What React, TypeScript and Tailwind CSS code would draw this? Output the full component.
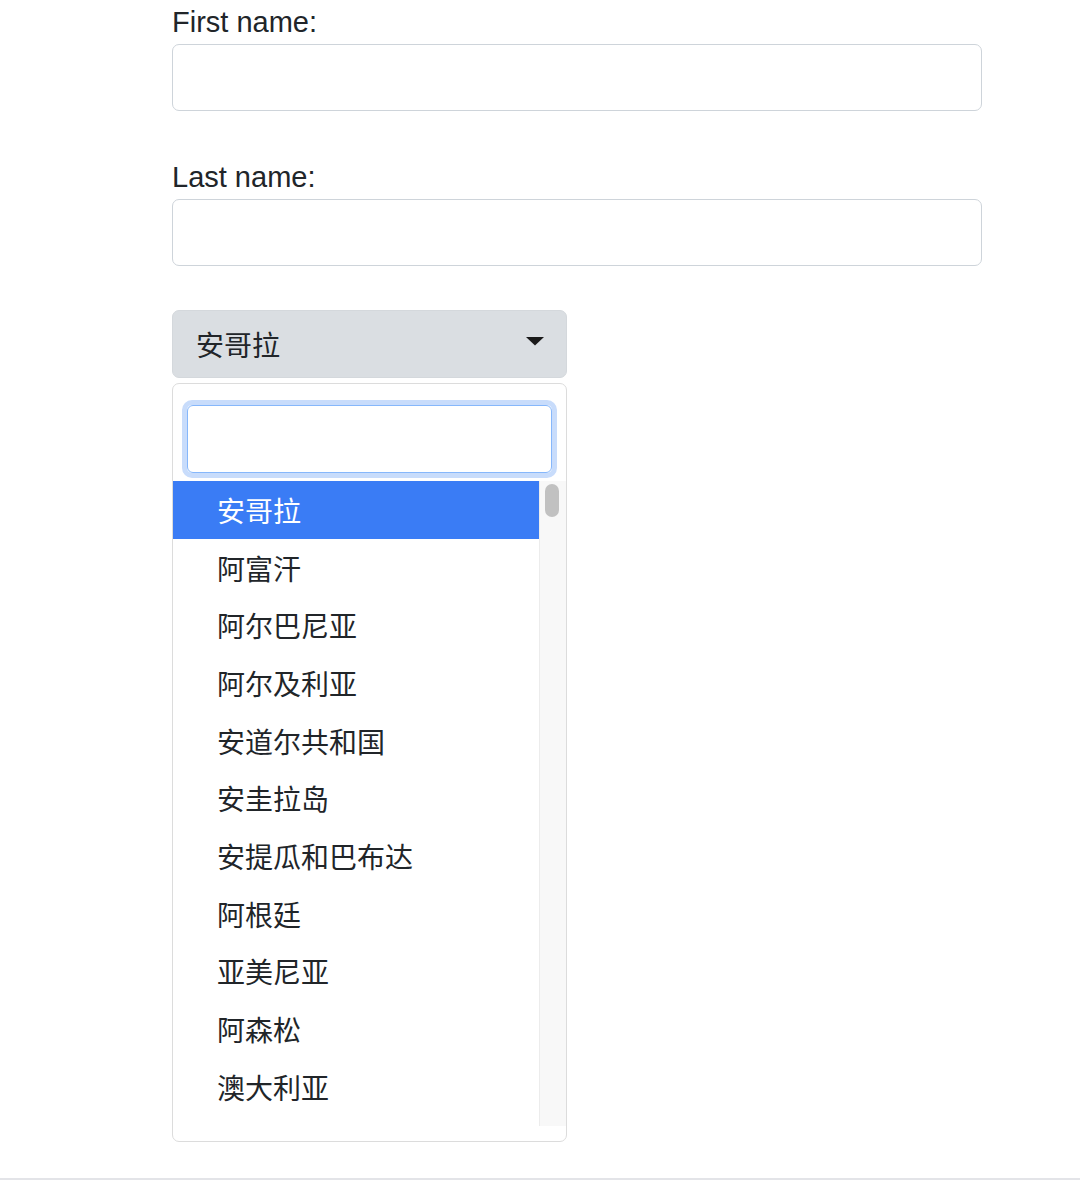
const countries = [
  '安哥拉',
  '阿富汗',
  '阿尔巴尼亚',
  '阿尔及利亚',
  '安道尔共和国',
  '安圭拉岛',
  '安提瓜和巴布达',
  '阿根廷',
  '亚美尼亚',
  '阿森松',
  '澳大利亚',
];

const latin = { fontFamily: '"Liberation Sans", "Noto Sans CJK SC", sans-serif' };
const cjk = { fontFamily: '"Noto Sans CJK SC", "Liberation Sans", sans-serif' };

function Field({ label }: { label: string }) {
  return (
    <div className="mb-[44px]">
      <label className="block text-[29px] leading-[44px] text-[#212529]" style={latin}>
        {label}
      </label>
      <input
        type="text"
        className="block h-[67px] w-[810px] rounded-[7px] border-[1.5px] border-[#ced4da] bg-white outline-none"
      />
    </div>
  );
}

function CountrySelect() {
  return (
    <div className="w-[395px]">
      <div className="flex h-[68px] items-center justify-between rounded-[7px] border border-[#d4d8dc] bg-[#dadee2] pl-[23px] pr-[22px]">
        <span className="text-[28px] text-[#212529]" style={cjk}>
          安哥拉
        </span>
        <svg width="18" height="9" viewBox="0 0 18 9" className="mb-[6px]">
          <path d="M0 0 H18 L9 8.5 Z" fill="#1a1a1a" />
        </svg>
      </div>
      <div className="mt-[5px] h-[759px] rounded-[7px] border-[1.5px] border-[#dcdcdc] bg-white">
        <div className="px-[9px] pt-[16px] pb-[3.5px]">
          <div className="rounded-[10px] border-[5px] border-[#c8dcfb]">
            <input
              type="text"
              className="block h-[67.5px] w-full rounded-[6px] border-[1.5px] border-[#86b7fb] bg-white outline-none"
            />
          </div>
        </div>
        <div className="flex h-[645px] overflow-hidden">
          <ul className="w-[366px]" style={cjk}>
            {countries.map((c, i) => (
              <li
                key={c}
                className={
                  i === 0
                    ? 'flex h-[57.7px] items-center bg-[#3a7cf5] pl-[44px] text-[28px] text-white'
                    : 'flex h-[57.7px] items-center pl-[44px] text-[28px] text-[#212529]'
                }
              >
                {c}
              </li>
            ))}
          </ul>
          <div className="flex-1 border-l border-[#ececec] bg-[#f8f8f8] pt-[3px] pl-[5px]">
            <div className="h-[33px] w-[14px] rounded-full bg-[#c1c1c1]" />
          </div>
        </div>
      </div>
    </div>
  );
}

export default function App() {
  return (
    <div className="flex h-[1183px] w-[1080px] flex-col overflow-hidden bg-white">
      <div className="pl-[172px]">
        <Field label="First name:" />
        <Field label="Last name:" />
        <CountrySelect />
      </div>
      <div className="mt-[36px] h-[2px] w-full bg-[#e3e4e8]" />
    </div>
  );
}
